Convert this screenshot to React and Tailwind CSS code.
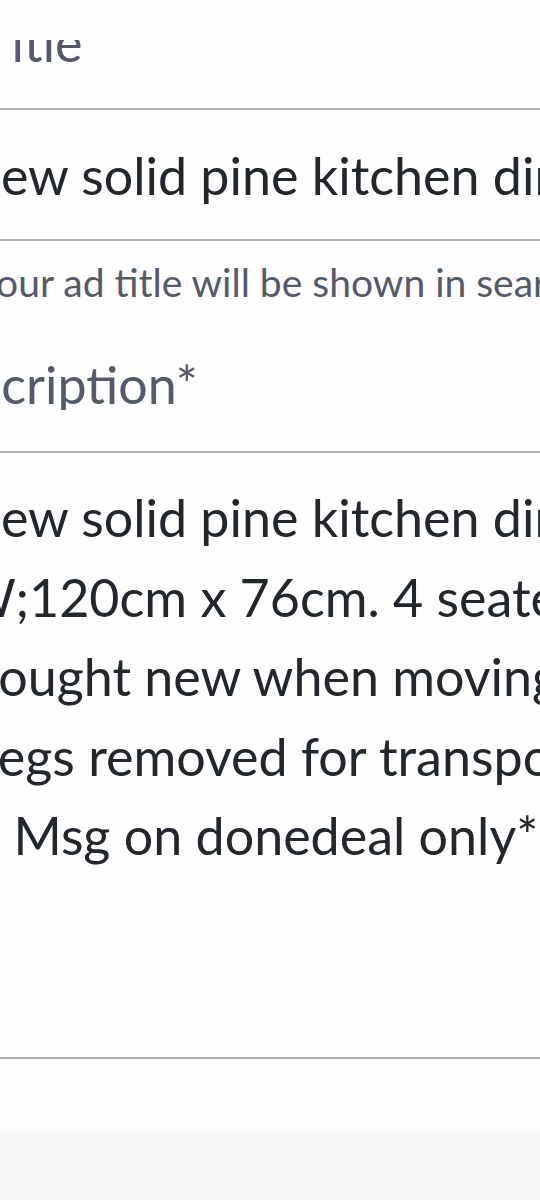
import React from 'react';

// Ad posting form — title + description fields, scrolled into view
const lines = [
    { text: 'New solid pine kitchen dining table', ml: 'ml-[-38px]' },
    { text: 'W;120cm x 76cm. 4 seater table', ml: 'ml-[-38px]' },
    { text: 'Bought new when moving house', ml: 'ml-[-35px]' },
    { text: 'Legs removed for transport', ml: 'ml-[-27px]' },
    { text: '** Msg on donedeal only**', ml: 'ml-[-44px]' },
];

const App = () => {
    return (
        <div className="w-[540px] h-[1200px] overflow-hidden bg-[#fdfdfd] font-['Lato',sans-serif] flex flex-col">
            <div className="h-[40px] shrink-0 bg-[#fdfdfd]" />

            <div className="overflow-hidden shrink-0">
                <div className="mt-[-24px] ml-[-19px] whitespace-nowrap text-[52px] leading-none text-[#525a6b]">
                    Title
                </div>
            </div>

            {/* title input */}
            <div className="mt-[40px] h-[133px] shrink-0 border-y-2 border-[#b0b0b0] flex items-center overflow-hidden">
                <div className="ml-[-38px] whitespace-nowrap text-[52px] leading-none text-[#22262d]">
                    New solid pine kitchen dining table
                </div>
            </div>

            <div className="mt-[22px] shrink-0 overflow-hidden">
                <p className="ml-[-24px] whitespace-nowrap text-[39px] leading-none text-[#525a6b]">
                    Your ad title will be shown in search results
                </p>
            </div>

            <div className="mt-[56px] shrink-0 overflow-hidden">
                <div className="ml-[-88px] whitespace-nowrap text-[52px] leading-none text-[#525a6b]">
                    Description*
                </div>
            </div>

            {/* description textarea */}
            <div className="mt-[41px] h-[608px] shrink-0 border-y-2 border-[#b0b0b0] pt-[25px] overflow-hidden">
                {lines.map((l) => (
                    <div
                        key={l.text}
                        className={`${l.ml} whitespace-nowrap text-[52px] leading-[79.5px] text-[#22262d]`}
                    >
                        {l.text}
                    </div>
                ))}
            </div>

            <div className="h-[72px] shrink-0" />
            <div className="flex-1 bg-[#f7f7f7]" />
        </div>
    );
};

export default App;
